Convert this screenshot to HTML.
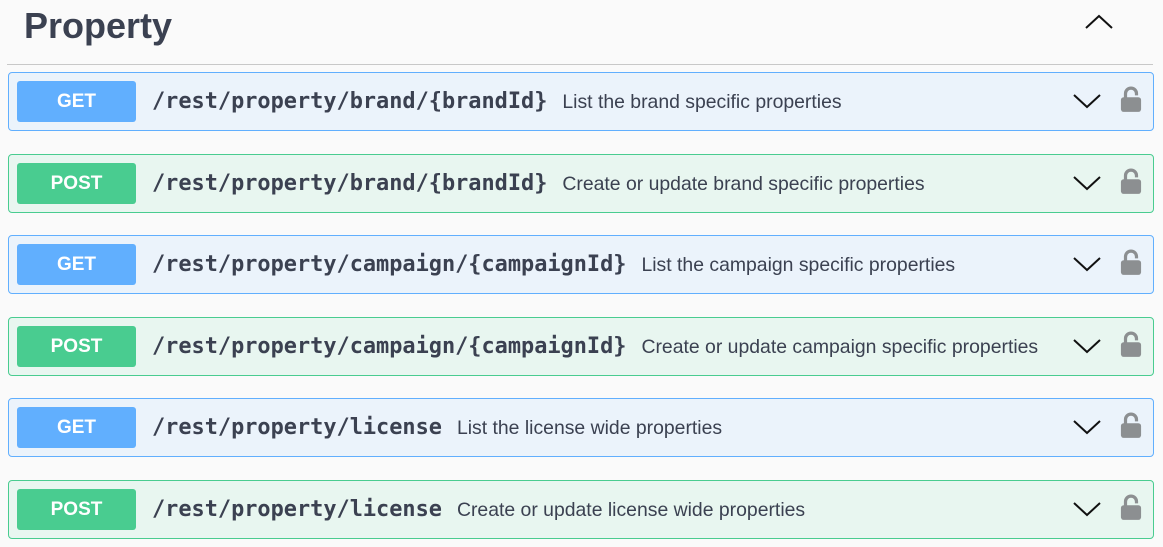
<!DOCTYPE html>
<html><head><style>
body{margin:0;background:#fafafa;width:1163px;height:547px;overflow:hidden;font-family:"Liberation Sans",Arial,sans-serif;}
h1{position:absolute;left:24px;top:5px;margin:0;font-size:36px;font-weight:bold;color:#3b4151;}
.hr{position:absolute;left:7px;top:64px;width:1146px;height:1px;background:#c8c8c8;}
.up{position:absolute;left:1085px;top:14px;}
.op{position:absolute;left:8px;width:1144px;height:57px;border:1px solid;border-radius:4px;box-sizing:content-box;}
.get{background:#ebf3fb;border-color:#61affe;}
.post{background:#e8f6f0;border-color:#49cc90;}
.b{position:absolute;left:8px;top:8px;width:119px;height:41px;border-radius:3px;color:#fff;font-weight:bold;font-size:19px;text-align:center;line-height:41px;}
.get .b{background:#61affe}.post .b{background:#49cc90}
.p{position:absolute;left:143px;top:0;line-height:57px;font-family:"DejaVu Sans Mono","Liberation Mono",monospace;font-weight:bold;font-size:21.9px;color:#3b4151;white-space:nowrap;}
.p span{font-family:"Liberation Sans",Arial,sans-serif;font-weight:normal;font-size:19.4px;margin-left:15px;}
.c{position:absolute;left:1064px;top:20px;}
.l{position:absolute;left:1111px;top:13px;}
</style></head><body>
<h1>Property</h1>
<svg class="up" width="28" height="16" viewBox="0 0 28 16"><path d="M1 14 L14 2 L27 14" fill="none" stroke="#111" stroke-width="2"/></svg>
<div class="hr"></div>

<div class="op get" style="top:72px"><div class="b">GET</div><div class="p">/rest/property/brand/{brandId}<span>List the brand specific properties</span></div>ICON</div>
<div class="op post" style="top:154px"><div class="b">POST</div><div class="p">/rest/property/brand/{brandId}<span>Create or update brand specific properties</span></div>ICON</div>
<div class="op get" style="top:235px"><div class="b">GET</div><div class="p">/rest/property/campaign/{campaignId}<span>List the campaign specific properties</span></div>ICON</div>
<div class="op post" style="top:317px"><div class="b">POST</div><div class="p">/rest/property/campaign/{campaignId}<span>Create or update campaign specific properties</span></div>ICON</div>
<div class="op get" style="top:398px"><div class="b">GET</div><div class="p">/rest/property/license<span>List the license wide properties</span></div>ICON</div>
<div class="op post" style="top:480px"><div class="b">POST</div><div class="p">/rest/property/license<span>Create or update license wide properties</span></div>ICON</div>

<script>
var ic='<svg class="c" width="28" height="16" viewBox="0 0 28 16"><path d="M1 2 L14 14 L27 2" fill="none" stroke="#111" stroke-width="2"/></svg><svg class="l" width="22" height="28" viewBox="0 0 24 30"><path d="M6 13 V8 a6 6 0 0 1 12 0 V10" fill="none" stroke="#8c8f91" stroke-width="3.5"/><rect x="1" y="12" width="22" height="16" rx="3" fill="#8c8f91"/></svg>';
document.querySelectorAll('.op').forEach(function(o){o.innerHTML=o.innerHTML.replace('ICON',ic);});
</script>
</body></html>
